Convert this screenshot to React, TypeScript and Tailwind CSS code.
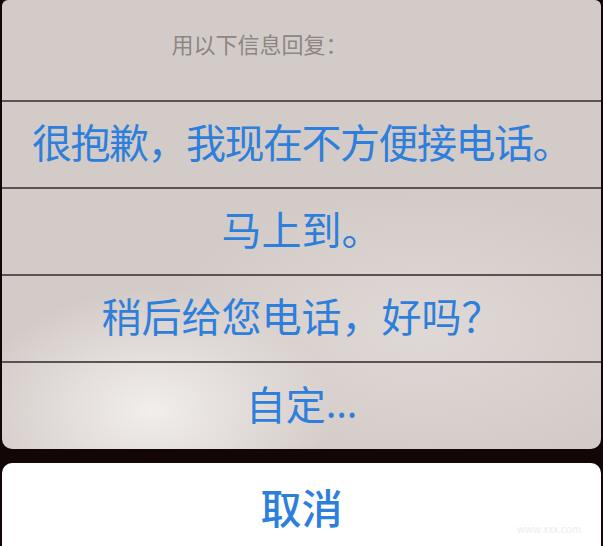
import React from "react";

const font = { fontFamily: '"Noto Sans CJK SC", "Noto Sans", sans-serif' };

function Row({ children, last, tight }: { children: React.ReactNode; last?: boolean; tight?: boolean }) {
  return (
    <div
      className={
        "flex h-[87px] items-center justify-center pb-[7px] text-[40px] leading-none text-[#2d7fdb] " +
        (tight ? "tracking-[-1.5px] " : "") +
        (last ? "" : "border-b-2 border-[#5b5351]")
      }
    >
      {children}
    </div>
  );
}

export default function App() {
  return (
    <div className="w-[603px] h-[546px] overflow-hidden bg-[#120606] flex flex-col px-[2px]" style={font}>
      <div className="relative h-[449px] rounded-b-[10px] rounded-t-[6px] overflow-hidden bg-[#d3cbc8] flex flex-col">
        <div className="pointer-events-none absolute inset-0 bg-[radial-gradient(ellipse_180px_120px_at_150px_410px,rgba(245,242,240,0.9),rgba(245,242,240,0)_100%)]" />
        <div className="pointer-events-none absolute inset-0 bg-[radial-gradient(ellipse_260px_140px_at_420px_330px,rgba(235,230,228,0.5),rgba(235,230,228,0)_100%)]" />
        <div className="relative flex flex-col">
          <div className="flex h-[102px] items-start justify-center pt-[27px] pr-[84px] border-b-2 border-[#5b5351] text-[22px] text-[#8c8684]">
            用以下信息回复：
          </div>
          <Row tight>很抱歉，我现在不方便接电话。</Row>
          <Row>马上到。</Row>
          <Row>稍后给您电话，好吗？</Row>
          <Row last>
            自定<span className="font-['Noto_Sans',sans-serif]">…</span>
          </Row>
        </div>
      </div>
      <div className="h-[14px]" />
      <div className="relative flex-1 rounded-t-[10px] bg-white flex items-start justify-center pt-[23px]">
        <span className="text-[41px] leading-none font-medium text-[#2d7fdb]">取消</span>
        <div className="absolute right-[20px] bottom-[10px] text-[10px] text-[#eeeeee]">www.xxx.com</div>
      </div>
    </div>
  );
}
